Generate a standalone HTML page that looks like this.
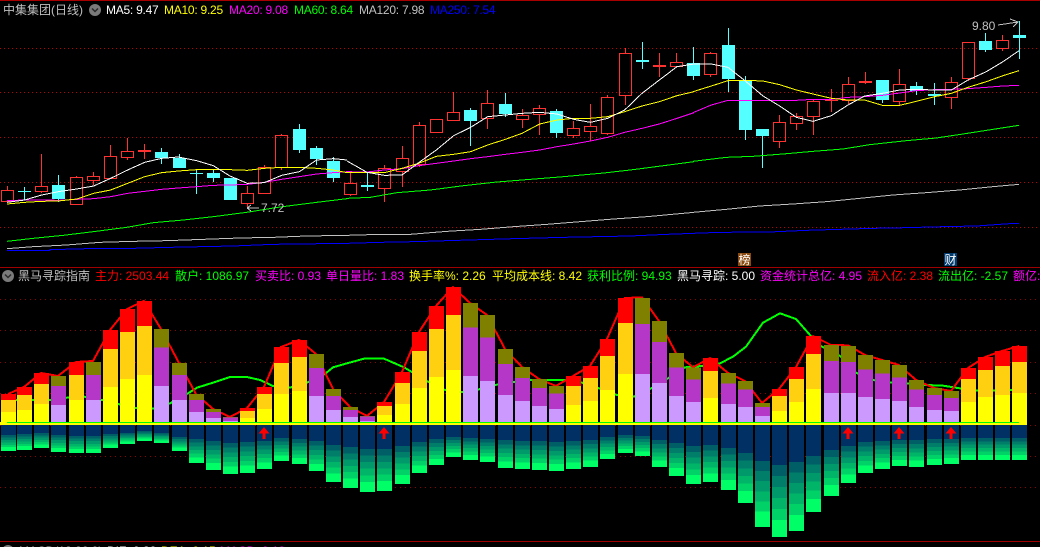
<!DOCTYPE html>
<html><head><meta charset="utf-8"><style>
html,body{margin:0;padding:0;background:#000}
#a{position:relative;width:1040px;height:547px;overflow:hidden;background:#000;font:12px/16px "Liberation Sans","WenQuanYi Zen Hei","Noto Sans CJK SC",sans-serif}
#a svg{position:absolute;left:0;top:0}
#a span{position:absolute;white-space:nowrap;height:16px}
#a span.m{letter-spacing:-.25px}
.l{fill:none;vector-effect:non-scaling-stroke;stroke-width:1}
</style></head><body><div id="a">
<svg width="1040" height="547" viewBox="0 0 1040 547" shape-rendering="crispEdges">
<defs><linearGradient id="b" x1="0" y1="0" x2="0" y2="1">
<stop offset="0" stop-color="#005f66"/><stop offset=".153" stop-color="#005f66"/><stop offset=".153" stop-color="#007e6a"/><stop offset=".306" stop-color="#007e6a"/><stop offset=".306" stop-color="#009a6a"/><stop offset=".459" stop-color="#009a6a"/><stop offset=".459" stop-color="#00b468"/><stop offset=".612" stop-color="#00b468"/><stop offset=".612" stop-color="#00d268"/><stop offset=".765" stop-color="#00d268"/><stop offset=".765" stop-color="#00ff66"/><stop offset="1" stop-color="#00ff66"/>
</linearGradient></defs>
<!-- frame -->
<rect x="0" y="0" width="1040" height="1" fill="#a80000"/>
<rect x="0" y="267" width="1040" height="1" fill="#a00000"/>
<rect x="0" y="541" width="1040" height="1" fill="#a00000"/>
<!-- grid -->
<path d="M0 48.5H1040M0 92.5H1040M0 137.5H1040M0 182.5H1040M0 227.5H1040" stroke="#c00000" stroke-dasharray="1 3" fill="none"/>
<path d="M0 299.5H1040M0 330.5H1040M0 362.5H1040M0 393.5H1040M0 425.5H1040M0 456.5H1040M0 487.5H1040" stroke="#900000" stroke-dasharray="1 4" fill="none"/>
<!-- cyan candles -->
<path stroke="#54ffff" fill="none" d="M24.5 187V200M58.5 175V202M161.5 148V164M179.5 154V168M196.5 169V194M213.5 170V182M230.5 178V200M299.5 124V153M316.5 146V165M333.5 157V182M367.5 173V191M470.5 108V146M505.5 93V117M556.5 109V138M642.5 42V69M693.5 47V80M728.5 28V92M745.5 76V140M762.5 129V168M882.5 80V103M916.5 82V95M934.5 83V105M985.5 33V52M1019.5 21V59"/>
<g fill="#54ffff">
<rect x="18" y="191" width="13" height="1"/><rect x="52" y="185" width="13" height="14"/><rect x="155" y="152" width="13" height="6"/><rect x="173" y="158" width="13" height="10"/><rect x="190" y="173" width="13" height="1"/><rect x="207" y="173" width="13" height="5"/><rect x="224" y="178" width="13" height="22"/><rect x="293" y="129" width="13" height="21"/><rect x="310" y="148" width="13" height="11"/><rect x="327" y="161" width="13" height="17"/><rect x="361" y="185" width="13" height="2"/><rect x="464" y="110" width="13" height="11"/><rect x="499" y="104" width="13" height="10"/><rect x="550" y="111" width="13" height="22"/><rect x="636" y="60" width="13" height="2"/><rect x="687" y="63" width="13" height="13"/><rect x="722" y="45" width="13" height="34"/><rect x="739" y="80" width="13" height="50"/><rect x="756" y="129" width="13" height="7"/><rect x="876" y="80" width="13" height="20"/><rect x="910" y="86" width="13" height="5"/><rect x="928" y="94" width="13" height="2"/><rect x="979" y="41" width="13" height="9"/><rect x="1013" y="35" width="13" height="3"/>
</g>
<!-- red candles -->
<path stroke="#ff3232" fill="none" d="M7.5 186V190M41.5 154V186M41.5 192V193M76.5 176V177M93.5 172V176M93.5 181V185M110.5 145V156M127.5 138V151M127.5 158V160M144.5 144V159M247.5 186V193M247.5 204V208M264.5 165V167M281.5 134V135M281.5 168V170M350.5 173V183M350.5 195V196M384.5 165V168M384.5 189V202M402.5 146V158M402.5 172V187M419.5 122V125M419.5 165V167M453.5 92V112M487.5 90V103M487.5 119V129M522.5 109V115M522.5 120V128M539.5 105V108M539.5 115V135M573.5 121V128M573.5 136V138M590.5 104V126M590.5 132V141M607.5 95V97M607.5 134V135M625.5 48V53M625.5 96V105M659.5 53V77M676.5 53V62M710.5 52V53M710.5 75V77M779.5 115V122M779.5 142V148M796.5 113V116M796.5 124V130M813.5 100V101M813.5 117V135M831.5 89V112M848.5 77V84M848.5 101V104M865.5 72V84M899.5 69V84M899.5 102V106M951.5 77V82M951.5 98V109M968.5 79V81M1002.5 35V40M1002.5 49V51"/>
<path fill="#ff3232" fill-rule="evenodd" d="M1 190h13v12h-13zM2 191h11v10h-11zM35 186h13v6h-13zM36 187h11v4h-11zM70 177h13v28h-13zM71 178h11v26h-11zM87 176h13v5h-13zM88 177h11v3h-11zM104 156h13v23h-13zM105 157h11v21h-11zM121 151h13v7h-13zM122 152h11v5h-11zM241 193h13v11h-13zM242 194h11v9h-11zM258 167h13v27h-13zM259 168h11v25h-11zM275 135h13v33h-13zM276 136h11v31h-11zM344 183h13v12h-13zM345 184h11v10h-11zM378 168h13v21h-13zM379 169h11v19h-11zM396 158h13v14h-13zM397 159h11v12h-11zM413 125h13v40h-13zM414 126h11v38h-11zM430 119h13v14h-13zM431 120h11v12h-11zM447 112h13v9h-13zM448 113h11v7h-11zM481 103h13v16h-13zM482 104h11v14h-11zM516 115h13v5h-13zM517 116h11v3h-11zM533 108h13v7h-13zM534 109h11v5h-11zM567 128h13v8h-13zM568 129h11v6h-11zM584 126h13v6h-13zM585 127h11v4h-11zM601 97h13v37h-13zM602 98h11v35h-11zM619 53h13v43h-13zM620 54h11v41h-11zM670 62h13v5h-13zM671 63h11v3h-11zM704 53h13v22h-13zM705 54h11v20h-11zM773 122h13v20h-13zM774 123h11v18h-11zM790 116h13v8h-13zM791 117h11v6h-11zM807 101h13v16h-13zM808 102h11v14h-11zM842 84h13v17h-13zM843 85h11v15h-11zM893 84h13v18h-13zM894 85h11v16h-11zM945 82h13v16h-13zM946 83h11v14h-11zM962 42h13v37h-13zM963 43h11v35h-11zM996 40h13v9h-13zM997 41h11v7h-11z"/>
<g fill="#ff3232"><rect x="138" y="150" width="13" height="2"/><rect x="653" y="65" width="13" height="2"/><rect x="825" y="100" width="13" height="1"/><rect x="859" y="81" width="13" height="2"/></g>
<!-- MA lines left -->
<g transform="scale(.33333)">
<polyline class="l" stroke="#0000ff" points="21,751 150,751 150,749 300,745 400,745 510,742 700,738 820,733 1041,730"/>
<polyline class="l" stroke="#c0c0c0" points="21,746 100,740 200,735 300,727 400,724 500,722 610,718 720,714 820,712 920,708 1041,706"/>
<polyline class="l" stroke="#00ff00" points="21,724 100,715 190,706 280,695 380,682 460,668 550,660 640,650 740,637 840,621 950,607 1041,596"/>
<polyline class="l" stroke="#ff00ff" points="21,602 74,600 125,600 175,601 230,598 281,596 332,590 383,580 434,574 485,568 535,564 590,560 640,556 690,555 742,553 793,547 845,538 898,530 950,522 1000,518 1041,515"/>
<polyline class="l" stroke="#ffff00" points="21,612 74,607 125,604 175,603 230,597 281,580 332,570 383,550 434,530 485,518 535,513 590,509 640,509 690,509 742,511 793,505 845,502 898,502 950,505 1000,510 1041,518"/>
<polyline class="l" stroke="#ffffff" points="21,607 74,600 125,585 175,575 230,567 281,558 332,535 383,510 434,487 485,475 535,471 590,482 640,497 690,528 742,550 793,548 845,526 898,515 950,480 1000,476 1041,480"/>
</g>
<g transform="translate(347 0) scale(.33333)">
<polyline class="l" stroke="#0000ff" points="0,730 100,727 200,725 400,719 500,716 650,712 850,708 960,703 1041,700"/>
<polyline class="l" stroke="#c0c0c0" points="0,706 100,703 190,703 300,694 400,688 500,680 600,673 700,665 800,657 900,650 1041,637"/>
<polyline class="l" stroke="#00ff00" points="0,595 70,592 150,578 250,570 350,557 450,546 550,538 650,530 770,519 850,510 950,497 1041,485"/>
<polyline class="l" stroke="#ff00ff" points="0,515 60,516 112,510 165,506 215,497 268,490 320,483 371,476 422,470 475,463 525,457 578,450 630,440 680,432 730,423 782,412 833,397 885,385 937,372 990,355 1041,338"/>
<polyline class="l" stroke="#ffff00" points="0,517 60,518 112,518 165,505 215,490 268,469 320,463 371,455 422,435 475,418 525,400 578,372 630,360 680,355 730,355 782,350 833,335 885,318 937,305 990,287 1041,275"/>
<polyline class="l" stroke="#ffffff" points="0,483 60,517 112,526 165,525 215,488 268,450 320,407 371,382 422,350 475,345 525,340 578,337 630,342 680,358 730,367 782,355 833,330 885,280 937,240 990,200 1041,192"/>
</g>
<g transform="translate(693 0) scale(.33333)">
<polyline class="l" stroke="#0000ff" points="0,700 80,697 230,696 340,691 440,688 540,685 640,683 750,680 850,678 950,671 978,670"/>
<polyline class="l" stroke="#c0c0c0" points="0,637 100,628 200,618 300,612 400,605 500,595 600,585 700,578 800,570 900,560 978,553"/>
<polyline class="l" stroke="#00ff00" points="0,484 100,472 180,469 270,462 360,454 450,447 530,434 640,422 730,414 810,402 900,388 978,376"/>
<polyline class="l" stroke="#ff00ff" points="0,338 55,315 105,301 157,301 210,301 260,301 310,301 360,298 415,298 465,292 515,290 568,286 620,279 670,272 725,269 775,268 825,266 880,262 930,258 978,256"/>
<polyline class="l" stroke="#ffff00" points="0,275 55,258 105,242 157,241 210,243 260,254 310,270 360,282 415,295 465,300 515,300 568,316 620,316 670,304 725,290 775,280 825,262 880,245 930,227 978,212"/>
<polyline class="l" stroke="#ffffff" points="0,192 55,192 105,202 157,243 210,288 260,318 310,352 360,364 415,347 465,315 515,288 568,280 620,270 670,268 725,270 775,270 825,240 880,215 930,185 978,152"/>
</g>
<!-- hi/lo arrows -->
<path stroke="#c0c0c0" fill="none" d="M247 208H259M247 208L251 205M247 208L251 211"/>
<path stroke="#c0c0c0" fill="none" d="M998 25L1018 22M1010 19L1018 22L1013 27"/>
<!-- lower panel -->
<g transform="translate(0 250) scale(1 .33333)">
<polyline class="l" style="stroke-width:2" stroke="#00ff00" points="7,452 17,450 50,450 67,443 84,440 102,450 118,462 136,474 153,476 170,460 188,430 197,413 213,398 230,381 247,381 260,390 273,408 290,413 307,398 325,372 333,352 347,340 364,326 384,326 404,352 414,370 428,395 445,420 462,426 479,418 495,405 514,396 530,390 547,390 564,390 582,398 599,415 617,435 634,440 650,417 667,387 685,352 693,350 703,348 720,340 733,320 746,290 763,218 780,190 796,207 810,255 821,288 840,318 856,368 873,390 890,398 908,400 926,405 943,407 960,415 976,422 993,422 1010,420 1019,420"/>
<polyline class="l" style="stroke-width:2" stroke="#ff0000" points="8,432 24,411 41,369 58,378 76,336 93,333 110,240 127,177 144,153 161,237 179,339 196,432 213,477 230,501 247,474 264,411 281,291 299,270 316,312 333,417 350,471 367,498 384,456 402,366 419,246 436,168 453,111 470,159 487,195 505,297 522,351 539,387 556,408 573,378 590,348 607,267 625,144 642,142 659,213 676,309 693,352 710,324 728,369 745,393 762,459 779,417 796,351 813,258 831,285 848,286 865,315 882,330 899,345 916,390 934,414 951,423 968,354 985,321 1002,303 1019,288"/>
<g fill="none" stroke-width="15">
<path stroke="#ff0000" d="M8.5 432V450M24.5 411V435M41.5 369V402M76.5 336V375M110.5 240V297M127.5 177V246M144.5 153V228M247.5 474V483M264.5 411V432M281.5 291V339M299.5 270V321M384.5 456V468M402.5 366V399M419.5 246V303M436.5 168V237M453.5 111V195M573.5 378V408M590.5 348V384M607.5 267V318M625.5 144V219M710.5 324V363M779.5 417V438M796.5 351V387M813.5 258V312M968.5 354V387M985.5 321V360M1002.5 303V348M1019.5 288V336"/>
<path stroke="#ffd010" d="M8.5 450V486M24.5 435V480M41.5 402V462M76.5 375V450M110.5 297V411M127.5 246V387M144.5 228V375M247.5 483V504M264.5 432V477M281.5 339V432M299.5 321V423M384.5 468V495M402.5 399V462M419.5 303V414M436.5 237V381M453.5 195V360M573.5 408V465M590.5 384V453M607.5 318V420M625.5 219V372M710.5 363V444M779.5 438V483M796.5 387V456M813.5 312V417M968.5 387V456M985.5 360V441M1002.5 348V435M1019.5 336V429"/>
<path stroke="#ffff00" d="M8.5 486V525M24.5 480V525M41.5 462V525M76.5 450V525M110.5 411V525M127.5 387V525M144.5 375V525M247.5 504V525M264.5 477V525M281.5 432V525M299.5 423V525M384.5 495V525M402.5 462V525M419.5 414V525M436.5 381V525M453.5 360V525M573.5 465V525M590.5 453V525M607.5 420V525M625.5 372V525M710.5 444V525M779.5 483V525M796.5 456V525M813.5 417V525M968.5 456V525M985.5 441V525M1002.5 435V525M1019.5 429V525"/>
<path stroke="#808000" d="M58.5 378V408M93.5 336V375M161.5 237V293M179.5 339V375M196.5 432V450M213.5 477V486M230.5 501V502M316.5 312V354M333.5 417V438M350.5 471V480M367.5 498V500M470.5 159V232M487.5 195V262M505.5 297V342M522.5 351V384M539.5 387V414M556.5 408V430M642.5 144V222M659.5 213V276M676.5 309V352M693.5 352V388M728.5 369V400M745.5 393V418M762.5 459V471M831.5 285V333M848.5 288V336M865.5 315V358M882.5 330V370M899.5 345V382M916.5 390V418M934.5 414V435M951.5 423V444"/>
<path stroke="#b437c8" d="M58.5 408V465M93.5 375V450M161.5 293V408M179.5 375V450M196.5 450V486M213.5 486V504M230.5 502V513M316.5 354V438M333.5 438V480M350.5 480V501M367.5 500V513M470.5 232V378M487.5 262V393M505.5 342V435M522.5 384V453M539.5 414V468M556.5 430V477M642.5 222V372M659.5 276V399M676.5 352V438M693.5 388V456M728.5 400V462M745.5 418V471M762.5 471V498M831.5 333V429M848.5 336V429M865.5 358V441M882.5 370V447M899.5 382V453M916.5 418V471M934.5 435V480M951.5 444V483"/>
<path stroke="#cc99ff" d="M58.5 465V525M93.5 450V525M161.5 408V525M179.5 450V525M196.5 486V525M213.5 504V525M230.5 513V525M316.5 438V525M333.5 480V525M350.5 501V525M367.5 513V525M470.5 378V525M487.5 393V525M505.5 435V525M522.5 453V525M539.5 468V525M556.5 477V525M642.5 372V525M659.5 399V525M676.5 438V525M693.5 456V525M728.5 462V525M745.5 471V525M762.5 498V525M831.5 429V525M848.5 429V525M865.5 441V525M882.5 447V525M899.5 453V525M916.5 471V525M934.5 480V525M951.5 483V525"/>
<path stroke="#003064" d="M8.5 525V555M24.5 525V552M41.5 525V549M58.5 525V555M76.5 525V558M93.5 525V558M110.5 525V552M127.5 525V549M144.5 525V543M161.5 525V549M179.5 525V561M196.5 525V567M213.5 525V573M230.5 525V579M247.5 525V576M264.5 525V573M281.5 525V564M299.5 525V567M316.5 525V573M333.5 525V585M350.5 525V591M367.5 525V597M384.5 525V597M402.5 525V588M419.5 525V576M436.5 525V567M453.5 525V561M470.5 525V564M487.5 525V567M505.5 525V570M522.5 525V573M539.5 525V573M556.5 525V576M573.5 525V573M590.5 525V570M607.5 525V561M625.5 525V555M642.5 525V558M659.5 525V570M676.5 525V579M693.5 525V588M710.5 525V585M728.5 525V594M745.5 525V609M762.5 525V633M779.5 525V645M796.5 525V636M813.5 525V618M831.5 525V600M848.5 525V588M865.5 525V576M882.5 525V573M899.5 525V570M916.5 525V570M934.5 525V567M951.5 525V567M968.5 525V564M985.5 525V564M1002.5 525V564M1019.5 525V564"/>
</g>
<g fill="url(#b)">
<rect x="1" y="555" width="15" height="48"/><rect x="17" y="552" width="15" height="48"/><rect x="34" y="549" width="15" height="45"/><rect x="51" y="555" width="15" height="51"/><rect x="69" y="558" width="15" height="51"/><rect x="86" y="558" width="15" height="51"/><rect x="103" y="552" width="15" height="42"/><rect x="120" y="549" width="15" height="33"/><rect x="137" y="543" width="15" height="30"/><rect x="154" y="549" width="15" height="30"/><rect x="172" y="561" width="15" height="42"/><rect x="189" y="567" width="15" height="72"/><rect x="206" y="573" width="15" height="87"/><rect x="223" y="579" width="15" height="93"/><rect x="240" y="576" width="15" height="93"/><rect x="257" y="573" width="15" height="84"/><rect x="274" y="564" width="15" height="69"/><rect x="292" y="567" width="15" height="75"/><rect x="309" y="573" width="15" height="90"/><rect x="326" y="585" width="15" height="111"/><rect x="343" y="591" width="15" height="123"/><rect x="360" y="597" width="15" height="129"/><rect x="377" y="597" width="15" height="126"/><rect x="395" y="588" width="15" height="114"/><rect x="412" y="576" width="15" height="93"/><rect x="429" y="567" width="15" height="78"/><rect x="446" y="561" width="15" height="60"/><rect x="463" y="564" width="15" height="66"/><rect x="480" y="567" width="15" height="69"/><rect x="498" y="570" width="15" height="84"/><rect x="515" y="573" width="15" height="84"/><rect x="532" y="573" width="15" height="87"/><rect x="549" y="576" width="15" height="87"/><rect x="566" y="573" width="15" height="84"/><rect x="583" y="570" width="15" height="81"/><rect x="600" y="561" width="15" height="66"/><rect x="618" y="555" width="15" height="54"/><rect x="635" y="558" width="15" height="60"/><rect x="652" y="570" width="15" height="81"/><rect x="669" y="579" width="15" height="99"/><rect x="686" y="588" width="15" height="114"/><rect x="703" y="585" width="15" height="111"/><rect x="721" y="594" width="15" height="126"/><rect x="738" y="609" width="15" height="150"/><rect x="755" y="633" width="15" height="198"/><rect x="772" y="645" width="15" height="216"/><rect x="789" y="636" width="15" height="207"/><rect x="806" y="618" width="15" height="168"/><rect x="824" y="600" width="15" height="138"/><rect x="841" y="588" width="15" height="111"/><rect x="858" y="576" width="15" height="93"/><rect x="875" y="573" width="15" height="84"/><rect x="892" y="570" width="15" height="78"/><rect x="909" y="570" width="15" height="81"/><rect x="927" y="567" width="15" height="78"/><rect x="944" y="567" width="15" height="75"/><rect x="961" y="564" width="15" height="66"/><rect x="978" y="564" width="15" height="66"/><rect x="995" y="564" width="15" height="66"/><rect x="1012" y="564" width="15" height="66"/>
</g>
</g>
<rect x="0" y="422" width="1027" height="3" fill="#ffff00"/>
<rect x="7" y="422" width="1012" height="1" fill="#00ff00"/>
<!-- up arrows -->
<g fill="#ff0000" shape-rendering="auto">
<path d="M264 427L269.500 433.500H265.500V439H262.500V433.500H258.500Z"/>
<path d="M384 427L389.500 433.500H385.500V439H382.500V433.500H378.500Z"/>
<path d="M848 427L853.500 433.500H849.500V439H846.500V433.500H842.500Z"/>
<path d="M899 427L904.500 433.500H900.500V439H897.500V433.500H893.500Z"/>
<path d="M951 427L956.500 433.500H952.500V439H949.500V433.500H945.500Z"/>
</g>
<!-- badges -->
<rect x="738" y="253" width="13" height="13" fill="#8b4a10"/>
<rect x="944" y="253" width="13" height="13" fill="#003a6e"/>
<!-- round icons -->
<g shape-rendering="auto">
<circle cx="95" cy="10" r="6" fill="#7a7a7a"/><path d="M92 8.500L95 11.500L98 8.500" fill="none" stroke="#2a2a2a" stroke-width="1.500"/>
<circle cx="8" cy="276" r="6" fill="#7a7a7a"/><path d="M5 274.500L8 277.500L11 274.500" fill="none" stroke="#2a2a2a" stroke-width="1.500"/>
<circle cx="8" cy="551" r="6" fill="#7a7a7a"/>
</g>
</svg>
<span style="left:3px;top:2px;color:#c0c0c0">中集集团(日线)</span>
<span class="m" style="left:106px;top:2px;color:#fff">MA5: 9.47</span>
<span class="m" style="left:164px;top:2px;color:#ff0">MA10: 9.25</span>
<span class="m" style="left:229px;top:2px;color:#f0f">MA20: 9.08</span>
<span class="m" style="left:294px;top:2px;color:#0f0">MA60: 8.64</span>
<span class="m" style="left:359px;top:2px;color:#c0c0c0">MA120: 7.98</span>
<span class="m" style="left:430px;top:2px;color:#00f">MA250: 7.54</span>
<span style="left:261px;top:200px;color:#c0c0c0">7.72</span>
<span style="left:972px;top:18px;color:#c0c0c0">9.80</span>
<span style="left:738px;top:252px;width:13px;text-align:center;color:#fff">榜</span>
<span style="left:944px;top:252px;width:13px;text-align:center;color:#fff">财</span>
<span style="left:18px;top:268px;color:#c0c0c0">黑马寻踪指南</span>
<span style="left:95px;top:268px;color:#f00">主力: 2503.44</span>
<span style="left:175px;top:268px;color:#0f0">散户: 1086.97</span>
<span style="left:255px;top:268px;color:#f0f">买卖比: 0.93</span>
<span style="left:326px;top:268px;color:#f0f">单日量比: 1.83</span>
<span style="left:409px;top:268px;color:#ff0">换手率%: 2.26</span>
<span style="left:492px;top:268px;color:#ff0">平均成本线: 8.42</span>
<span style="left:587px;top:268px;color:#0f0">获利比例: 94.93</span>
<span style="left:677px;top:268px;color:#fff">黑马寻踪: 5.00</span>
<span style="left:760px;top:268px;color:#f0f">资金统计总亿: 4.95</span>
<span style="left:867px;top:268px;color:#f00">流入亿: 2.38</span>
<span style="left:938px;top:268px;color:#0f0">流出亿: -2.57</span>
<span style="left:1013px;top:268px;color:#f0f">额亿:</span>
<span style="left:19px;top:543px;color:#c0c0c0">MACD(12,26,9)</span>
<span style="left:107px;top:543px;color:#fff">DIF: 0.32</span>
<span style="left:161px;top:543px;color:#ff0">DEA: 0.15</span>
<span style="left:220px;top:543px;color:#f0f">MACD: 0.19</span>
</div></body></html>
